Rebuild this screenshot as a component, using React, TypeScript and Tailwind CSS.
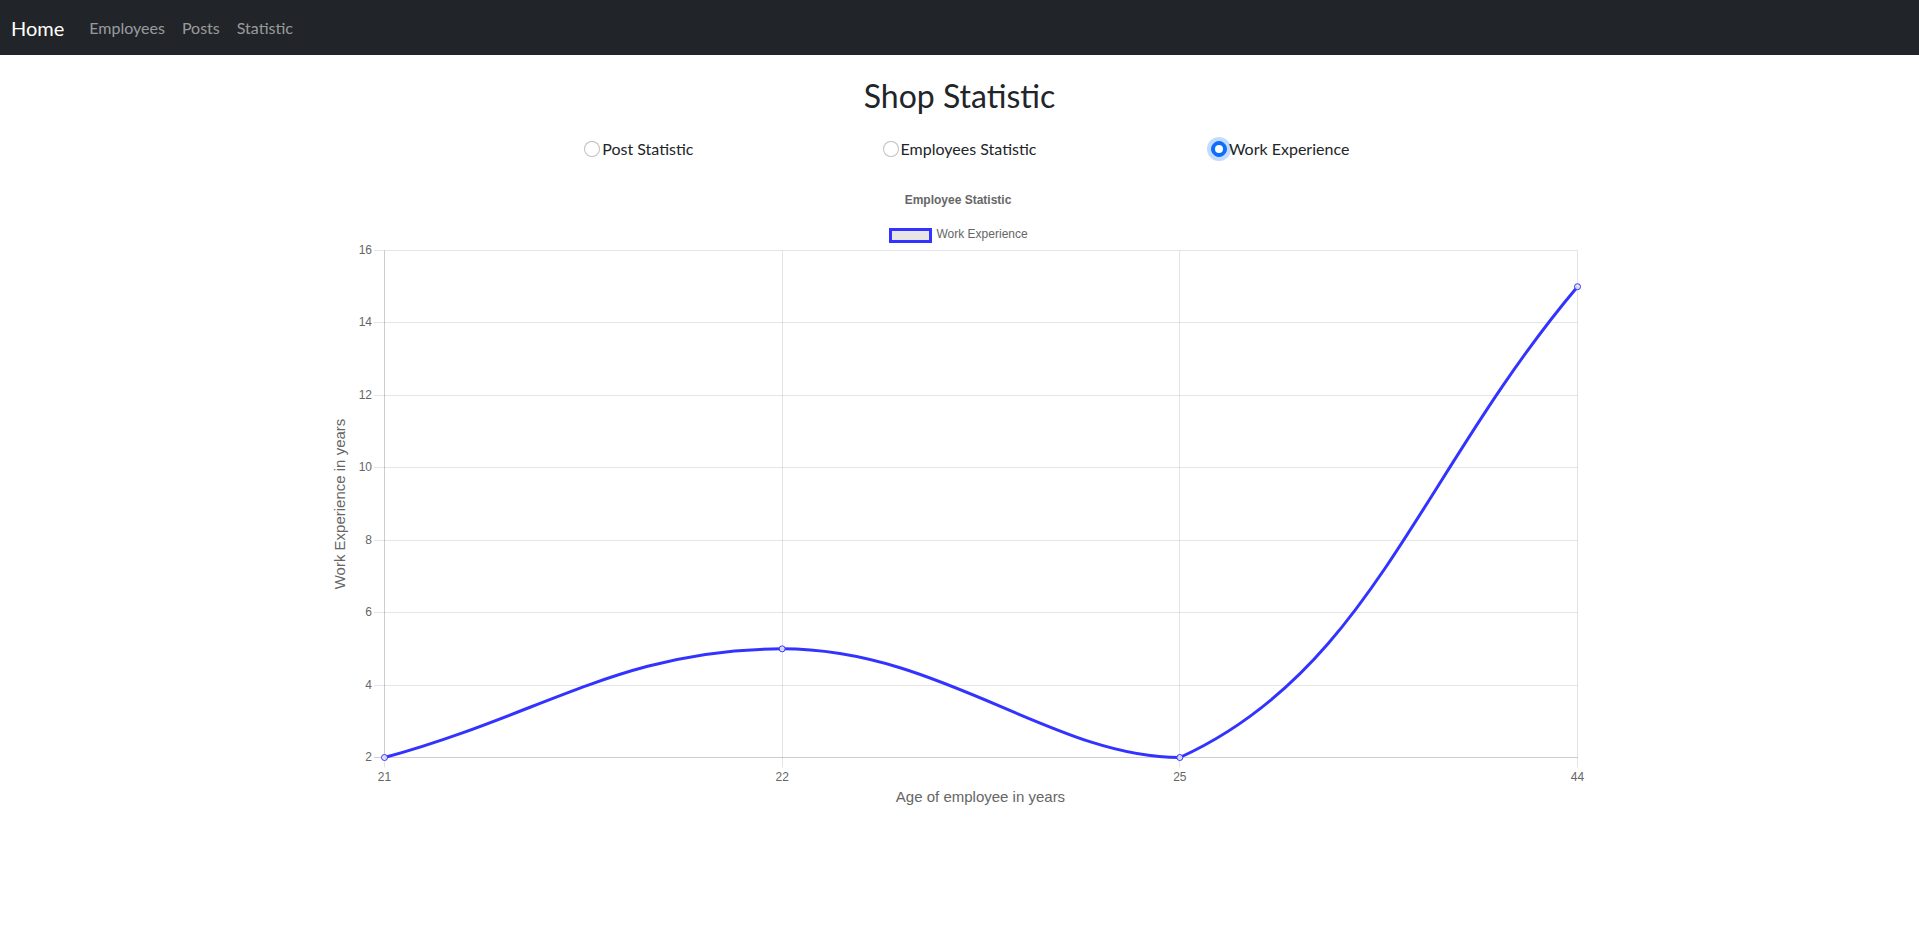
import React from "react";

const L = 384.5;
const R = 1577.5;
const T = 251.5;
const B = 758.5;
const yOf = (v: number) => B - ((v - 2) * (B - T)) / 14;
const xOf = (i: number) => L + (i * (R - L)) / 3;

const labels = ["21", "22", "25", "44"];
const values = [2, 5, 2, 15];

type P = { x: number; y: number };

function spline(p0: P, p1: P, p2: P, t: number) {
  const d01 = Math.hypot(p1.x - p0.x, p1.y - p0.y);
  const d12 = Math.hypot(p2.x - p1.x, p2.y - p1.y);
  let s01 = d01 / (d01 + d12);
  let s12 = d12 / (d01 + d12);
  if (isNaN(s01)) s01 = 0;
  if (isNaN(s12)) s12 = 0;
  const fa = t * s01;
  const fb = t * s12;
  return {
    prev: { x: p1.x - fa * (p2.x - p0.x), y: p1.y - fa * (p2.y - p0.y) },
    next: { x: p1.x + fb * (p2.x - p0.x), y: p1.y + fb * (p2.y - p0.y) },
  };
}

const clamp = (p: P): P => ({
  x: Math.max(L, Math.min(R, p.x)),
  y: Math.max(T, Math.min(B, p.y)),
});

function splinePath(pts: P[]) {
  const n = pts.length;
  const cps = pts.map((p, i) => {
    const c = spline(pts[i - 1] || p, p, pts[i + 1] || p, 0.4);
    return { prev: clamp(c.prev), next: clamp(c.next) };
  });
  let d = `M ${pts[0].x} ${pts[0].y}`;
  for (let i = 0; i < n - 1; i++) {
    d += ` C ${cps[i].next.x} ${cps[i].next.y} ${cps[i + 1].prev.x} ${cps[i + 1].prev.y} ${pts[i + 1].x} ${pts[i + 1].y}`;
  }
  return d;
}

function Chart() {
  const pts = values.map((v, i) => ({ x: xOf(i), y: yOf(v) }));
  const yTicks = [2, 4, 6, 8, 10, 12, 14, 16];
  const grid = "rgba(0,0,0,0.1)";
  const font = "'Liberation Sans', Arial, Helvetica, sans-serif";
  return (
    <svg width={1279} height={660} viewBox="320 176 1279 660" className="block mx-auto">
      <text x={958} y={202} textAnchor="middle" dominantBaseline="middle" fontFamily={font} fontSize={12} fontWeight="bold" fill="#666">
        Employee Statistic
      </text>
      <rect x={890.5} y={230.5} width={40} height={12} fill="#e6e6e6" stroke="#3333ff" strokeWidth={3} />
      <text x={936.5} y={236} dominantBaseline="middle" fontFamily={font} fontSize={12} fill="#666">
        Work Experience
      </text>
      {yTicks.map((v) => {
        const y = Math.round(yOf(v) - 0.5) + 0.5;
        return (
          <g key={v}>
            <line x1={374} x2={R} y1={y} y2={y} stroke={grid} strokeWidth={1} />
            <text x={372} y={y} textAnchor="end" dominantBaseline="middle" fontFamily={font} fontSize={12} fill="#666">
              {v}
            </text>
          </g>
        );
      })}
      {labels.map((lab, i) => {
        const x = Math.round(xOf(i) - 0.5) + 0.5;
        return (
          <g key={lab}>
            <line x1={x} x2={x} y1={T} y2={B + 10} stroke={grid} strokeWidth={1} />
            <text x={xOf(i)} y={778.5} textAnchor="middle" dominantBaseline="middle" fontFamily={font} fontSize={12} fill="#666">
              {lab}
            </text>
          </g>
        );
      })}
      <line x1={L} x2={L} y1={T} y2={B} stroke={grid} strokeWidth={1} />
      <line x1={L - 10} x2={R} y1={B} y2={B} stroke={grid} strokeWidth={1} />
      <text
        x={341.5}
        y={505}
        textAnchor="middle"
        dominantBaseline="middle"
        fontFamily={font}
        fontSize={15}
        fill="#666"
        transform="rotate(-90 341.5 505)"
      >
        Work Experience in years
      </text>
      <text x={980.5} y={799.5} textAnchor="middle" dominantBaseline="middle" fontFamily={font} fontSize={15} fill="#666">
        Age of employee in years
      </text>
      <path d={splinePath(pts)} fill="none" stroke="#3333ff" strokeWidth={3} />
      {pts.map((p, i) => (
        <circle key={i} cx={p.x} cy={p.y} r={3} fill="rgba(230,230,255,0.9)" stroke="#3333ff" strokeWidth={1} />
      ))}
    </svg>
  );
}

function Radio({ label, checked }: { label: string; checked?: boolean }) {
  return (
    <label className="flex items-center gap-[2px] text-[16px] leading-[24px] text-[#212529]">
      {checked ? (
        <span className="w-4 h-4 rounded-full bg-[#0d6efd] border border-[#0d6efd] flex items-center justify-center shadow-[0_0_0_4px_rgba(13,110,253,0.25)]">
          <span className="w-2 h-2 rounded-full bg-white" />
        </span>
      ) : (
        <span className="w-4 h-4 rounded-full border border-[rgba(0,0,0,0.25)] bg-white" />
      )}
      <span>{label}</span>
    </label>
  );
}

export default function App() {
  return (
    <div className="min-h-[938px] bg-white font-['Lato','Noto_Sans',sans-serif]">
      <nav className="h-[55px] bg-[#212529] flex items-center px-[11px]">
        <span className="text-white text-[20px] mr-[25px]">Home</span>
        <div className="flex items-center gap-[17px] text-[16px] text-[rgba(255,255,255,0.55)]">
          <span>Employees</span>
          <span>Posts</span>
          <span>Statistic</span>
        </div>
      </nav>
      <h2 className="mt-[22px] text-center text-[32px] leading-[38.4px] text-[#212529]">Shop Statistic</h2>
      <div className="mt-[22px] mx-auto w-[962px] grid grid-cols-3 justify-items-center">
        <Radio label="Post Statistic" />
        <Radio label="Employees Statistic" />
        <Radio label="Work Experience" checked />
      </div>
      <div className="mt-[14px]">
        <Chart />
      </div>
    </div>
  );
}
